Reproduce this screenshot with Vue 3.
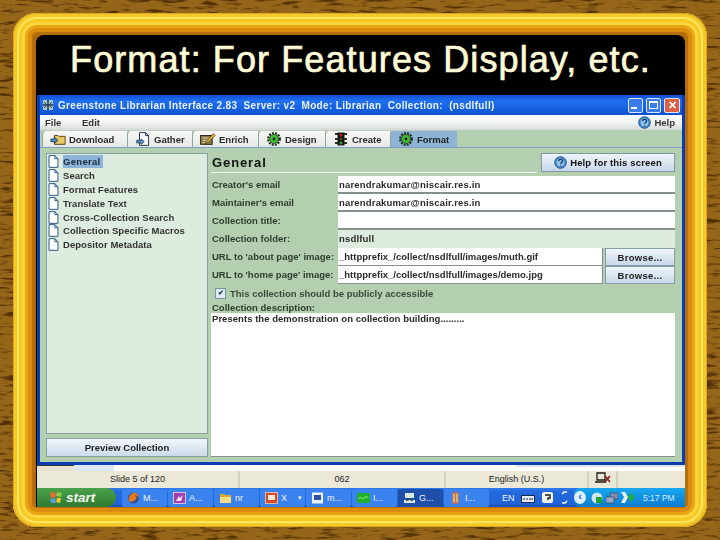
<script setup>
const tabs = [
  { label: 'Download', icon: 'download', w: 85 },
  { label: 'Gather', icon: 'gather', w: 65 },
  { label: 'Enrich', icon: 'enrich', w: 66 },
  { label: 'Design', icon: 'gear', w: 67 },
  { label: 'Create', icon: 'light', w: 65 },
  { label: 'Format', icon: 'gear', w: 67, active: true }
]
const sections = ['General', 'Search', 'Format Features', 'Translate Text', 'Cross-Collection Search', 'Collection Specific Macros', 'Depositor Metadata']
const rows = [
  { label: "Creator's email", value: 'narendrakumar@niscair.res.in' },
  { label: "Maintainer's email", value: 'narendrakumar@niscair.res.in' },
  { label: 'Collection title:', value: '' },
  { label: 'Collection folder:', value: 'nsdlfull', readonly: true },
  { label: "URL to 'about page' image:", value: '_httpprefix_/collect/nsdlfull/images/muth.gif', browse: true },
  { label: "URL to 'home page' image:", value: '_httpprefix_/collect/nsdlfull/images/demo.jpg', browse: true }
]
const tasks = [
  { label: 'M...', kind: 'fox' },
  { label: 'A...', kind: 'purple' },
  { label: 'nr', kind: 'folder' },
  { label: 'X', kind: 'red', more: true },
  { label: 'm...', kind: 'doc' },
  { label: 'I...', kind: 'green' },
  { label: 'G...', kind: 'net', active: true },
  { label: 'I...', kind: 'multi' }
]
</script>

<template>
  <div class="stage">
    <svg class="texture" width="720" height="540" aria-hidden="true">
      <filter id="grain" x="0" y="0" width="100%" height="100%" color-interpolation-filters="sRGB">
        <feTurbulence type="fractalNoise" baseFrequency="0.05 0.3" numOctaves="3" seed="7" />
        <feColorMatrix type="matrix" values="0 0 0 0 0.32  0 0 0 0 0.19  0 0 0 0 0.02  3 3 0 0 -3.1" />
      </filter>
      <rect width="720" height="540" filter="url(#grain)" />
    </svg>

    <svg width="0" height="0" class="defs" aria-hidden="true">
      <symbol id="gear" viewBox="0 0 16 16">
        <circle cx="8" cy="8" r="6.6" fill="none" stroke="#1c3018" stroke-width="2.6" stroke-dasharray="2.2 1.3" />
        <circle cx="8" cy="8" r="5.2" fill="#44b838" stroke="#1c3018" stroke-width=".8" />
        <circle cx="8" cy="8" r="1.6" fill="#123010" />
      </symbol>
      <symbol id="download" viewBox="0 0 18 14">
        <path d="M5 3h4l1 1h7v9H5z" fill="#e8c860" stroke="#4a3a10" />
        <path d="M1 7h4V5l4 3.500L5 12v-2H1z" fill="#4a88c0" stroke="#10304a" stroke-width=".8" />
      </symbol>
      <symbol id="gather" viewBox="0 0 16 16">
        <path d="M4 .7h7l3.400 3.400v11.200H4z" fill="#f2f6fa" stroke="#10203a" />
        <path d="M11 .7v3.400h3.400" fill="none" stroke="#10203a" />
        <path d="M.8 9.500h5V8l3.600 3-3.600 3v-1.500h-5z" fill="#5d95c6" stroke="#10304a" stroke-width=".8" />
      </symbol>
      <symbol id="enrich" viewBox="0 0 18 14">
        <rect x=".7" y="3" width="13" height="10" fill="#8a7a50" stroke="#201808" />
        <path d="M3 6h8M3 8.500h8M3 11h6" stroke="#e4d8b0" />
        <path d="M7 10l8-9 2 2-8 8-3 1z" fill="#e8c040" stroke="#402800" stroke-width=".8" />
      </symbol>
      <symbol id="light" viewBox="0 0 12 14">
        <rect x="2.500" y=".5" width="7" height="13" fill="#141410" />
        <path d="M0 2h3M9 2h3M0 7h3M9 7h3M0 11h3M9 11h3" stroke="#302a20" stroke-width="2" />
        <circle cx="6" cy="3" r="1.500" fill="#b02818" /><circle cx="6" cy="7" r="1.500" fill="#504818" /><circle cx="6" cy="11" r="1.500" fill="#30a030" />
      </symbol>
      <symbol id="help" viewBox="0 0 14 14">
        <circle cx="7" cy="7" r="6.300" fill="#3f86c4" stroke="#2a5e94" />
        <circle cx="7" cy="7" r="4.200" fill="#8fc0e6" />
        <path d="M5 5.500c0-2.400 4.200-2.400 4.200 0 0 1.600-2 1.500-2 3.100M7.200 10.300v1" fill="none" stroke="#123a6a" stroke-width="1.400" />
      </symbol>
      <symbol id="doc" viewBox="0 0 11 14">
        <path d="M.7.7h6.300l3.300 3.300v9.300H.7z" fill="#fff" stroke="#23507c" />
        <path d="M7 .7v3.300h3.300" fill="none" stroke="#23507c" />
      </symbol>
    </svg>

    <div class="frame">
      <div class="slide">
        <h1 class="headline">Format: For Features Display, etc.</h1>

        <div class="window">
          <div class="titlebar">
            <svg class="app-icon" width="10" height="10" viewBox="0 0 10 10"><rect width="10" height="10" fill="#a8c8d8" /><path d="M5 0v10M0 5h10" stroke="#203040" stroke-width="1.500" /><path d="M1 2l2 2M9 2L7 4M1 8l2-2M9 8L7 6" stroke="#304820" /></svg>
            <span class="title-text">Greenstone Librarian Interface 2.83&nbsp; Server: v2&nbsp; Mode: Librarian&nbsp; Collection:&nbsp; (nsdlfull)</span>
            <div class="win-buttons">
              <span class="win-btn"><i class="min"></i></span>
              <span class="win-btn"><i class="max"></i></span>
              <span class="win-btn close">✕</span>
            </div>
          </div>

          <div class="menubar">
            <span class="menu-file">File</span>
            <span>Edit</span>
            <span class="menu-help"><svg width="13" height="13"><use href="#help" /></svg>Help</span>
          </div>

          <div class="tabstrip">
            <div v-for="t in tabs" :key="t.label" class="tab" :class="{ active: t.active }" :style="{ width: t.w + 'px' }">
              <svg width="16" height="14"><use :href="'#' + t.icon" /></svg>
              <span>{{ t.label }}</span>
            </div>
          </div>

          <div class="body">
            <div class="left">
              <div class="tree">
                <div v-for="(s, i) in sections" :key="s" class="tree-row">
                  <svg width="11" height="13"><use href="#doc" /></svg>
                  <span :class="{ selected: i === 0 }">{{ s }}</span>
                </div>
              </div>
              <button class="preview">Preview Collection</button>
            </div>

            <div class="right">
              <div class="head">
                <div class="head-title">General</div>
                <button class="help-btn"><svg width="13" height="13"><use href="#help" /></svg>Help for this screen</button>
              </div>

              <div v-for="r in rows" :key="r.label" class="row">
                <label>{{ r.label }}</label>
                <div class="field" :class="{ readonly: r.readonly, url: r.browse }">{{ r.value }}</div>
                <button v-if="r.browse" class="browse">Browse...</button>
              </div>

              <div class="check-row">
                <span class="check">✔</span>
                <span>This collection should be publicly accessible</span>
              </div>
              <div class="desc-label">Collection description:</div>
              <div class="desc">Presents the demonstration on collection building.........</div>
            </div>
          </div>
        </div>

        <div class="strip"><span class="strip-tool"></span><span class="strip-tool light"></span><span class="strip-end"></span></div>

        <div class="status">
          <span class="st st1">Slide 5 of 120</span>
          <span class="st st2">062</span>
          <span class="st st3">English (U.S.)</span>
          <span class="st st4"><svg width="16" height="12" viewBox="0 0 16 12"><path d="M2 1h8v7H2zM0 10h11" fill="none" stroke="#201810" stroke-width="1.300" /><path d="M10 4l5 6M15 4l-5 6" stroke="#8a1c10" stroke-width="1.600" /></svg></span>
          <span class="st st5"></span>
        </div>

        <div class="taskbar">
          <div class="start"><svg width="14" height="13" viewBox="0 0 14 13"><path d="M1 2l5-1 1 5-5 1z" fill="#e86a30" /><path d="M8 1l5 1-1 4-5-1z" fill="#8cc850" /><path d="M1 8l5-1 1 5-5 0z" fill="#5a9ae0" /><path d="M8 7l4 0-1 5-4-1z" fill="#f0c830" /></svg><span>start</span></div>
          <div class="tasks">
            <div v-for="(t, i) in tasks" :key="i" class="task" :class="{ active: t.active }">
              <svg width="13" height="12" viewBox="0 0 13 12">
                <template v-if="t.kind === 'fox'"><circle cx="6.500" cy="6" r="5.500" fill="#35508c" /><path d="M2 9C1 4 5 0 9 1c2 1 3 3 3 5-1-2-3-3-4-2 2 0 2 3 0 4-2 2-5 2-6 1z" fill="#e8761a" /></template>
                <template v-else-if="t.kind === 'purple'"><rect x=".5" y=".5" width="12" height="11" fill="#a040b0" stroke="#f0d8f0" stroke-width=".8" /><path d="M3 9l3-5 1 2 3-3-2 6z" fill="#f4e4f0" /></template>
                <template v-else-if="t.kind === 'folder'"><path d="M1 2h4l1 1h6v8H1z" fill="#d8a830" /><path d="M1 5h11v6H1z" fill="#f6dc88" /></template>
                <template v-else-if="t.kind === 'red'"><rect x=".5" y=".5" width="12" height="11" fill="#d84a20" stroke="#f0d0c0" stroke-width=".8" /><rect x="3" y="3" width="7" height="5" fill="#f8e8d8" /></template>
                <template v-else-if="t.kind === 'doc'"><rect x="1" y=".5" width="11" height="11" fill="#eef2f8" /><path d="M3 3h7v5H3z" fill="#3050a0" /></template>
                <template v-else-if="t.kind === 'green'"><rect y="1" width="13" height="10" fill="#20b030" /><path d="M2 7c2-4 3 2 5-1s3 0 4-1" fill="none" stroke="#b0f060" /></template>
                <template v-else-if="t.kind === 'net'"><rect x="2" y="1" width="9" height="5" fill="#dce8e8" /><path d="M1 8h11v3H1z" fill="#dce8e8" /><path d="M3 6l7 3M10 6L3 9" stroke="#304858" /></template>
                <template v-else><rect x="3" y="0" width="7" height="12" rx="2" fill="#c07060" /><path d="M5 2v8M8 2v8" stroke="#d0d080" stroke-width="1.500" /></template>
              </svg>
              <span>{{ t.label }}</span>
              <em v-if="t.more">▾</em>
            </div>
          </div>
          <div class="lang">EN</div>
          <div class="tray">
            <svg width="14" height="10" viewBox="0 0 14 10"><rect x=".5" y="2.500" width="13" height="7" fill="#e8eef4" stroke="#182848" /><path d="M3 5v2M6 5v2M9 5v2M11 5v2" stroke="#182848" /></svg>
            <svg width="11" height="11" viewBox="0 0 11 11"><rect width="11" height="11" rx="2" fill="#f4f4ec" /><path d="M3 3h5v3H6v2" fill="none" stroke="#182020" stroke-width="1.400" /></svg>
            <svg width="9" height="13" viewBox="0 0 9 13"><path d="M2 3l2-2h3M7 10l-2 2H2" fill="none" stroke="#f0f4fa" stroke-width="1.500" /></svg>
          </div>
          <div class="clock-area">
            <span class="chevron">‹</span>
            <svg width="12" height="12" viewBox="0 0 12 12"><circle cx="6" cy="6" r="5.500" fill="#cfe6f0" /><rect x="5" y="5" width="6" height="6" fill="#20a040" /></svg>
            <svg width="12" height="12" viewBox="0 0 12 12"><rect x="4" y="1" width="8" height="6" fill="#8090b0" stroke="#303850" stroke-width=".6" /><rect x="0" y="5" width="8" height="6" fill="#9aa8c8" stroke="#303850" stroke-width=".6" /></svg>
            <svg width="13" height="13" viewBox="0 0 13 13"><path d="M0 1h4l3 5-3 6H0l3-6z" fill="#e8f0e0" /><path d="M7 6l4-5v3h2v5h-2v3z" fill="#18b040" /></svg>
            <span class="clock">5:17 PM</span>
          </div>
        </div>
      </div>
    </div>
  </div>
</template>

<style>
html, body { margin: 0; background: #8f5f16; }
</style>

<style scoped>
.stage {
  position: relative;
  width: 720px;
  height: 540px;
  box-sizing: border-box;
  padding: 13px;
  overflow: hidden;
  background: #95651a;
  font-family: "Liberation Sans", Arial, sans-serif;
}
.texture { position: absolute; left: 0; top: 0; }
.defs { position: absolute; }
.frame {
  position: relative;
  height: 514px;
  box-sizing: border-box;
  padding: 22px 22px 20px 23px;
  border-radius: 24px;
  background: #a8640c;
  box-shadow:
    inset 0 0 0 1px #d9a822,
    inset 0 0 0 4px #f6c92a,
    inset 0 0 0 6px #fde65c,
    inset 0 0 0 9px #f5c825,
    inset 0 0 0 12px #f9d63e,
    inset 0 0 0 15px #e9a414,
    inset 0 0 0 19px #d98c0e,
    inset 0 0 2px 22px #b8700c;
}
.slide {
  display: flex;
  flex-direction: column;
  height: 472px;
  background: #000;
  border-radius: 8px 8px 0 0;
  overflow: hidden;
}
.headline {
  height: 60px;
  margin: 0;
  padding-top: 5px;
  box-sizing: border-box;
  font-size: 36px;
  line-height: 39px;
  font-weight: 400;
  letter-spacing: 1.1px;
  color: #fffbd6;
  text-align: center;
  white-space: nowrap;
  -webkit-text-stroke: 0.7px #fffbd6;
}

.window {
  height: 370px;
  margin-left: 1px;
  box-sizing: border-box;
  display: flex;
  flex-direction: column;
  border: 3px solid #0c3cb0;
  border-top: 0;
  background: #b3cfb0;
  filter: blur(0.4px);
}
.titlebar {
  display: flex;
  align-items: center;
  height: 20px;
  flex: none;
  padding: 0 2px 0 3px;
  background: linear-gradient(#0f4fd0, #1f6ff0 30%, #1460e0 70%, #0f50cc);
  color: #eaf2ff;
  font-size: 10px;
  font-weight: 700;
  letter-spacing: 0.33px;
  white-space: nowrap;
}
.app-icon { flex: none; margin-right: 5px; }
.title-text { flex: 1; }
.win-buttons { display: flex; gap: 3px; }
.win-btn {
  display: flex;
  align-items: center;
  justify-content: center;
  box-sizing: border-box;
  width: 15px;
  height: 15px;
  border: 1px solid #dce6f8;
  border-radius: 2px;
  background: #3c7ce8;
  color: #fff;
  font-size: 11px;
  letter-spacing: 0;
}
.win-btn.close { width: 16px; background: #dc6044; }
.win-btn i { display: block; background: #fff; }
.win-btn .min { width: 6px; height: 2px; margin-top: 6px; margin-right: 3px; }
.win-btn .max { width: 9px; height: 8px; background: none; border: 1px solid #fff; border-top-width: 2px; box-sizing: border-box; }

.menubar {
  display: flex;
  align-items: center;
  height: 15px;
  flex: none;
  padding: 0 7px 0 5px;
  background: linear-gradient(#ffffff, #f2f4f4 50%, #d5dad6);
  font-size: 9.500px;
  font-weight: 700;
  color: #333;
}
.menu-file { width: 37px; }
.menu-help { margin-left: auto; display: flex; align-items: center; gap: 3px; }

.tabstrip {
  display: flex;
  flex: none;
  height: 18px;
  padding-left: 2px;
  border-bottom: 1px solid #7f9fc4;
  box-sizing: border-box;
}
.tab {
  display: flex;
  align-items: center;
  gap: 3px;
  box-sizing: border-box;
  padding-left: 7px;
  background: linear-gradient(#f8f8f8, #e4e8e4);
  border-left: 1px solid #8ea49a;
  border-top: 1px solid #c0ccc0;
  border-top-left-radius: 5px;
  font-size: 9.500px;
  font-weight: 700;
  color: #2a2a2a;
}
.tab.active { background: #8db4d6; color: #222; }

.body {
  flex: 1;
  min-height: 0;
  display: flex;
  gap: 3px;
  padding: 5px 7px 5px 6px;
  background: #b3cfb0;
}
.left { width: 162px; flex: none; display: flex; flex-direction: column; gap: 4px; }
.tree {
  height: 283px;
  box-sizing: border-box;
  padding: 1px 0 0 1px;
  background: #deecdf;
  border: 1px solid #84a0a4;
}
.tree-row {
  display: flex;
  align-items: center;
  gap: 4px;
  height: 13.800px;
  font-size: 9.500px;
  font-weight: 700;
  letter-spacing: 0.04px;
  color: #333;
  white-space: nowrap;
}
.selected { background: #8db4d8; padding: 1px 3px 1px 0; letter-spacing: 0.3px; color: #1c2c3c; }
.preview {
  height: 19px;
  margin: 0;
  padding: 0;
  border: 1px solid #84a0a4;
  background: linear-gradient(#f2f6fa, #ccdaea);
  font: 700 9.500px "Liberation Sans", Arial, sans-serif;
  color: #222;
}
.right { flex: 1; min-width: 0; display: flex; flex-direction: column; }
.head { display: flex; height: 23px; flex: none; }
.head-title {
  flex: 1;
  height: 17px;
  margin-right: 4px;
  padding-top: 2px;
  padding-left: 1px;
  border-bottom: 1px solid #f2f8f2;
  font-size: 13px;
  font-weight: 700;
  letter-spacing: 0.9px;
  color: #111;
}
.help-btn {
  display: flex;
  align-items: center;
  justify-content: center;
  gap: 3px;
  width: 134px;
  height: 19px;
  margin: 0;
  padding: 0;
  border: 1px solid #7f9aa4;
  background: linear-gradient(#eef4fa, #c8d8ea);
  font: 700 9.500px "Liberation Sans", Arial, sans-serif;
  letter-spacing: 0.15px;
  color: #111;
}
.row { display: flex; height: 18px; flex: none; }
.row label {
  width: 127px;
  flex: none;
  padding-left: 1px;
  box-sizing: border-box;
  font-size: 9.500px;
  font-weight: 700;
  line-height: 18px;
  letter-spacing: 0;
  color: #2d3d2d;
  white-space: nowrap;
}
.field {
  flex: 1;
  min-width: 0;
  box-sizing: border-box;
  padding-left: 1px;
  background: #fff;
  border-bottom: 2px solid #84908c;
  font-size: 9.500px;
  font-weight: 700;
  line-height: 17px;
  letter-spacing: 0.18px;
  color: #2a2a2a;
  white-space: nowrap;
  overflow: hidden;
}
.field.readonly { background: #deecdf; border-bottom: 0; }
.field.url { letter-spacing: 0; border-bottom-width: 1px; border-right: 1px solid #84908c; }
.browse {
  width: 70px;
  flex: none;
  margin: 0 0 0 2px;
  padding: 0;
  border: 1px solid #84a0a4;
  background: linear-gradient(#f0f6fa, #c8d8ea);
  font: 700 9.500px "Liberation Sans", Arial, sans-serif;
  letter-spacing: 0.3px;
  color: #222;
}
.check-row {
  display: flex;
  align-items: center;
  gap: 4px;
  height: 18px;
  flex: none;
  padding-left: 4px;
  font-size: 9.500px;
  font-weight: 700;
  color: #3a4a3a;
}
.check {
  display: flex;
  align-items: center;
  justify-content: center;
  width: 9px;
  height: 9px;
  border: 1px solid #7a94a0;
  background: #dde8f4;
  color: #234;
  font-size: 7px;
}
.desc-label {
  height: 11px;
  flex: none;
  padding-left: 1px;
  font-size: 9.500px;
  font-weight: 700;
  line-height: 11px;
  color: #2d3d2d;
}
.desc {
  flex: 1;
  background: #fff;
  border-bottom: 1px solid #84908c;
  padding-left: 1px;
  font-size: 9.500px;
  font-weight: 700;
  line-height: 12px;
  letter-spacing: 0.04px;
  color: #2a2a2a;
}

.strip { height: 6px; flex: none; margin-left: 1px; background: #fff; display: flex; }
.strip-tool { width: 37px; background: #e8e4d4; border-top: 1px solid #333; box-sizing: border-box; }
.strip-tool.light { width: 40px; background: #dce6f6; border: 0; }
.strip-end { height: 2px; margin-left: 402px; flex: 1; background: #dce6f6; }

.status {
  display: flex;
  height: 17px;
  flex: none;
  margin-left: 1px;
  background: #ece8d8;
  font-size: 9px;
  font-weight: 400;
  line-height: 17px;
  color: #222;
}
.st { box-sizing: border-box; text-align: center; border-right: 2px solid #d6d2c0; display: block; }
.st1 { width: 203px; }
.st2 { width: 206px; }
.st3 { width: 143px; }
.st4 { width: 29px; }
.st4 svg { margin-top: 1px; }
.st5 { flex: 1; border: 0; }

.taskbar {
  display: flex;
  align-items: center;
  height: 19px;
  flex: none;
  margin-left: 1px;
  background: linear-gradient(#2f7cec, #2268dc 20%, #2364da 80%, #1a4fb6);
  color: #eef4ff;
  font-size: 9px;
}
.start {
  display: flex;
  align-items: center;
  gap: 3px;
  width: 79px;
  height: 19px;
  box-sizing: border-box;
  padding-left: 12px;
  flex: none;
  background: linear-gradient(#4aa24a, #3c8e3c 50%, #2f7a2f);
  border-radius: 0 10px 10px 0;
  color: #f4f8f0;
  font: italic 700 13.500px "Liberation Sans", Arial, sans-serif;
}
.tasks { display: flex; gap: 1px; margin-left: 6px; flex: none; }
.task {
  display: flex;
  align-items: center;
  gap: 3px;
  width: 45px;
  height: 18px;
  box-sizing: border-box;
  padding-left: 5px;
  background: #3a82ee;
  border-radius: 2px;
  white-space: nowrap;
  overflow: hidden;
}
.task.active { background: #1e50aa; }
.task em { margin-left: 8px; font-style: normal; font-size: 7px; }
.lang { margin-left: 13px; width: 19px; flex: none; }
.tray { display: flex; align-items: center; gap: 7px; flex: none; width: 53px; }
.clock-area {
  flex: 1;
  display: flex;
  align-items: center;
  gap: 3px;
  height: 19px;
  background: linear-gradient(#18a8ee, #1190e0 50%, #0f7cd0);
  border-radius: 6px 0 0 6px;
}
.chevron {
  width: 12px;
  height: 13px;
  margin-right: 2px;
  border-radius: 50%;
  background: #dcecff;
  color: #2a5ec8;
  font: 700 11px/11px "Liberation Sans", Arial, sans-serif;
  text-align: center;
}
.clock { margin-left: 6px; font-size: 8.500px; color: #d8ecff; white-space: nowrap; }
</style>
